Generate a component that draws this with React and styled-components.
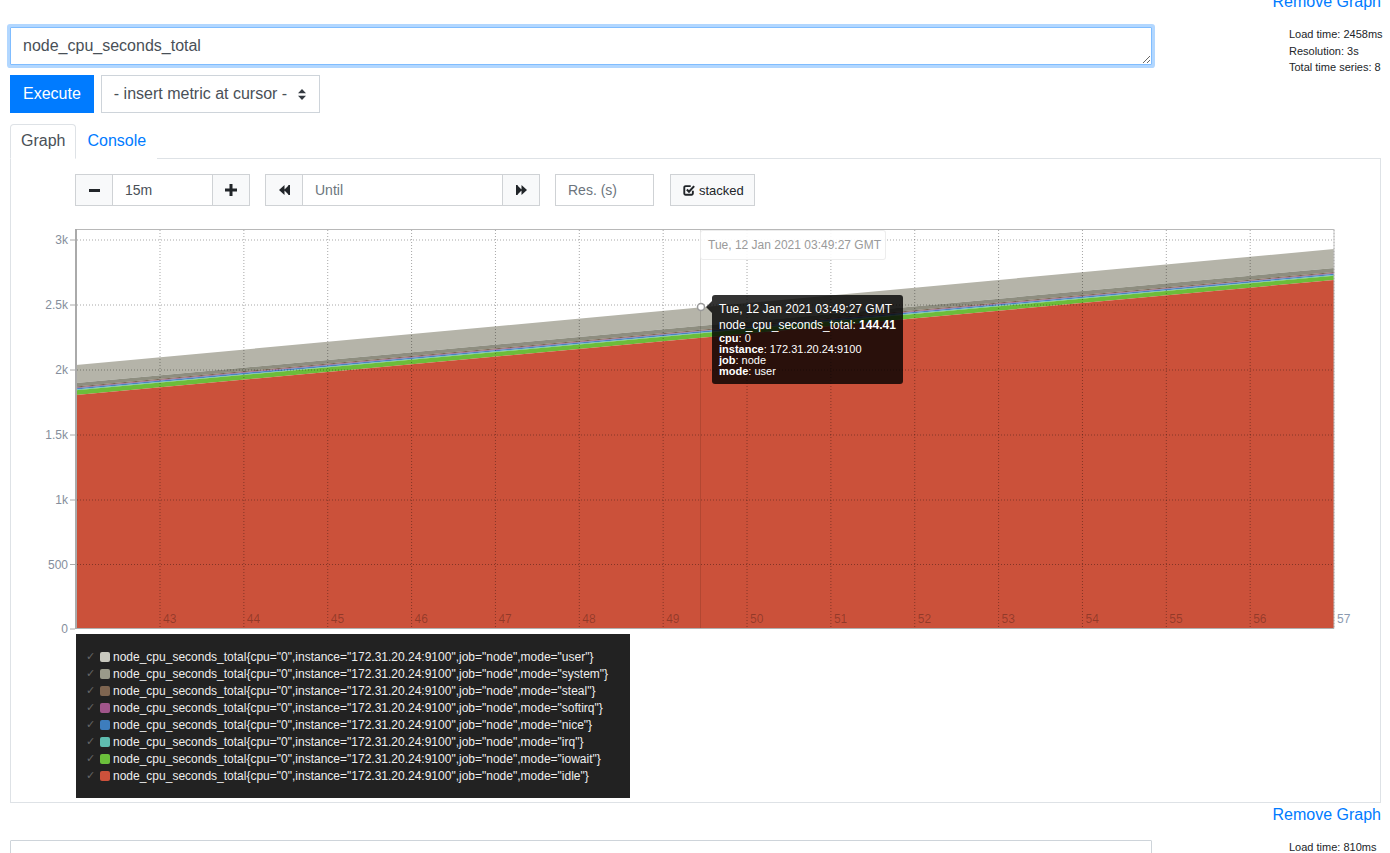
import React from 'react'
import styled, { createGlobalStyle } from 'styled-components'

const GlobalStyle = createGlobalStyle`
  html, body {
    margin: 0;
    padding: 0;
    background: #fff;
    overflow: hidden;
  }
  body {
    font-family: "Liberation Sans", Arial, sans-serif;
    font-size: 16px;
    color: #212529;
  }
  * { box-sizing: border-box; }
`

const labelText = 'node_cpu_seconds_total{cpu="0",instance="172.31.20.24:9100",job="node",mode="'

// pixel boundaries of each stacked band at the left (x=76) and right (x=1334) edge of the plot
const layers = [
  { mode: 'user', swatch: '#c8c8be', fill: '#b5b4a9', l: [365, 383], r: [249, 268] },
  { mode: 'system', swatch: '#9a9a8a', fill: '#8e8e80', l: [383, 386.5], r: [268, 272] },
  { mode: 'steal', swatch: '#7e6550', fill: '#7a6450', l: [386.5, 387.5], r: [272, 273] },
  { mode: 'softirq', swatch: '#a0558a', fill: '#9b5a88', l: [387.5, 388.2], r: [273, 273.7] },
  { mode: 'nice', swatch: '#3d7dbd', fill: '#4a83c0', l: [388.2, 389.6], r: [273.7, 275] },
  { mode: 'irq', swatch: '#5fbdb0', fill: '#5ebcad', l: [389.6, 390.2], r: [275, 275.7] },
  { mode: 'iowait', swatch: '#6bbf3b', fill: '#6cbd3a', l: [390.2, 395], r: [275.7, 280] },
  { mode: 'idle', swatch: '#cd513b', fill: '#cb513a', l: [395, 628], r: [280, 628] },
]

const yTicks = [
  { label: '3k', y: 240 },
  { label: '2.5k', y: 305 },
  { label: '2k', y: 370 },
  { label: '1.5k', y: 435 },
  { label: '1k', y: 500 },
  { label: '500', y: 564.5 },
  { label: '0', y: 629 },
]

const xTicks = Array.from({ length: 15 }, (_, i) => ({ label: String(43 + i), x: 160 + i * 83.86 }))

function Chart() {
  return (
    <ChartWrap>
      <svg width="1320" height="412" viewBox="40 222 1320 412">
        {layers.map((ly) => (
          <polygon
            key={ly.mode}
            points={`76,${ly.l[0]} 1334,${ly.r[0]} 1334,${ly.r[1]} 76,${ly.l[1]}`}
            fill={ly.fill}
          />
        ))}
        <line x1="76" y1="229.5" x2="1334" y2="229.5" stroke="#b8b8b8" />
        {yTicks.slice(0, 6).map((t) => (
          <line key={t.label} x1="77" y1={t.y} x2="1334" y2={t.y} stroke="rgba(0,0,0,0.35)" strokeDasharray="1 2" />
        ))}
        {xTicks.map((t) => (
          <line key={t.label} x1={t.x} y1="230" x2={t.x} y2="628" stroke="rgba(0,0,0,0.35)" strokeDasharray="1 2" />
        ))}
        <line x1="1334" y1="229" x2="1334" y2="628.5" stroke="#c4c4c4" />
        <line x1="76" y1="628.5" x2="1334" y2="628.5" stroke="#b0b0b0" />
        <line x1="76" y1="229" x2="76" y2="629" stroke="#aaaaaa" strokeWidth="2" />
        {yTicks.map((t) => (
          <g key={t.label}>
            <line x1="70" y1={t.y} x2="75" y2={t.y} stroke="#aaa" />
            <text x="68" y={t.y + 4} textAnchor="end" fontSize="12" fill="#858e9c" fontFamily="Liberation Sans, Arial, sans-serif">
              {t.label}
            </text>
          </g>
        ))}
        {xTicks.map((t, i) => (
          <text
            key={t.label}
            x={t.x + 3}
            y="623"
            fontSize="12"
            fill={i === xTicks.length - 1 ? '#8b9ab0' : 'rgba(0,0,0,0.28)'}
            fontFamily="Liberation Sans, Arial, sans-serif"
          >
            {t.label}
          </text>
        ))}
        <line x1="700.5" y1="230" x2="700.5" y2="628" stroke="rgba(0,0,0,0.12)" />
        <circle cx="701" cy="307" r="3.5" fill="#fff" stroke="#9a9a9a" strokeWidth="1.5" />
      </svg>
      <DateFlag>Tue, 12 Jan 2021 03:49:27 GMT</DateFlag>
      <Tooltip>
        <TipLine>Tue, 12 Jan 2021 03:49:27 GMT</TipLine>
        <TipLine>node_cpu_seconds_total: <b>144.41</b></TipLine>
        <TipSmall><b>cpu</b>: 0</TipSmall>
        <TipSmall><b>instance</b>: 172.31.20.24:9100</TipSmall>
        <TipSmall><b>job</b>: node</TipSmall>
        <TipSmall><b>mode</b>: user</TipSmall>
      </Tooltip>
    </ChartWrap>
  )
}

const IconMinus = () => (
  <svg width="11" height="11" viewBox="0 0 11 11"><rect x="0" y="4" width="11" height="3" fill="#212529" /></svg>
)
const IconPlus = () => (
  <svg width="12" height="12" viewBox="0 0 12 12"><path d="M4.5 0h3v4.5H12v3H7.5V12h-3V7.5H0v-3h4.5z" fill="#212529" /></svg>
)
const IconBack = () => (
  <svg width="11" height="10" viewBox="0 0 11 10"><path d="M0 5L5.5 0v10zM5 5l5-5v10z" fill="#212529" /><rect x="9.5" y="0" width="1.5" height="10" fill="#212529" /></svg>
)
const IconFwd = () => (
  <svg width="11" height="10" viewBox="0 0 11 10"><path d="M11 5L5.5 0v10zM6 5L1 0v10z" fill="#212529" /><rect x="0" y="0" width="1.5" height="10" fill="#212529" /></svg>
)
const IconCheckSquare = () => (
  <svg width="12" height="12" viewBox="0 0 14 14">
    <path d="M11.5 8v3a1.5 1.5 0 0 1-1.5 1.5H3A1.5 1.5 0 0 1 1.5 11V4A1.5 1.5 0 0 1 3 2.5h6" stroke="#212529" strokeWidth="2.2" fill="none" />
    <path d="M4.5 6.5l2.5 2.5 6-6.5" stroke="#212529" strokeWidth="2.4" fill="none" />
  </svg>
)
const IconSort = () => (
  <svg width="8" height="11" viewBox="0 0 8 11"><path d="M0 4.2L4 0l4 4.2zM0 6.8L4 11l4-4.2z" fill="#343a40" /></svg>
)

function App() {
  return (
    <>
      <GlobalStyle />
      <Page>
        <RemoveRow><RemoveLink>Remove Graph</RemoveLink></RemoveRow>
        <ExprRow>
          <Expr focused defaultValue="node_cpu_seconds_total" />
          <Stats>
            <div>Load time: 2458ms</div>
            <div>Resolution: 3s</div>
            <div>Total time series: 8</div>
          </Stats>
        </ExprRow>
        <ActionRow>
          <ExecuteButton>Execute</ExecuteButton>
          <MetricSelect>
            <span>- insert metric at cursor -</span>
            <IconSort />
          </MetricSelect>
        </ActionRow>
        <Tabs>
          <Tab active>Graph</Tab>
          <Tab>Console</Tab>
        </Tabs>
        <TabPanel>
          <Controls>
            <Group>
              <IconButton><IconMinus /></IconButton>
              <Field width={99} defaultValue="15m" />
              <IconButton><IconPlus /></IconButton>
            </Group>
            <Group>
              <IconButton><IconBack /></IconButton>
              <Field width={199} placeholder="Until" />
              <IconButton><IconFwd /></IconButton>
            </Group>
            <Field width={99} placeholder="Res. (s)" rounded />
            <StackedButton><IconCheckSquare />stacked</StackedButton>
          </Controls>
          <Chart />
          <Legend>
            {layers.map((ly) => (
              <LegendRow key={ly.mode}>
                <Check>✓</Check>
                <Swatch color={ly.swatch} />
                {labelText + ly.mode + '"}'}
              </LegendRow>
            ))}
          </Legend>
        </TabPanel>

        <RemoveRow><RemoveLink>Remove Graph</RemoveLink></RemoveRow>
        <ExprRow>
          <Expr defaultValue="" />
          <Stats>
            <div>Load time: 810ms</div>
            <div>Resolution: 3s</div>
          </Stats>
        </ExprRow>
      </Page>
    </>
  )
}

export default App

const Page = styled.div`
  padding: 0 9px 0 10px;
  margin-top: -10px;
`

const RemoveRow = styled.div`
  text-align: right;
  line-height: 24px;
  height: 24px;
`

const RemoveLink = styled.a`
  color: #007bff;
  font-size: 16px;
  cursor: pointer;
`

const ExprRow = styled.div`
  display: flex;
  align-items: flex-start;
  height: 38px;
  margin-top: 13px;
`

const Expr = styled.textarea`
  width: 1142px;
  height: 38px;
  flex: none;
  resize: vertical;
  padding: 6px 12px;
  font-family: "Liberation Sans", Arial, sans-serif;
  font-size: 16px;
  line-height: 24px;
  color: #495057;
  border: 1px solid ${(p) => (p.focused ? '#80bdff' : '#ced4da')};
  border-radius: 1px;
  box-shadow: ${(p) => (p.focused ? '0 0 0 3px rgba(0,123,255,0.3)' : 'none')};
  outline: none;
  overflow: hidden;
`

const Stats = styled.div`
  margin-left: 137px;
  margin-top: -1px;
  font-size: 11px;
  line-height: 16.5px;
  color: #212529;
  white-space: nowrap;
`

const ActionRow = styled.div`
  display: flex;
  gap: 7px;
  margin-top: 10px;
`

const ExecuteButton = styled.button`
  height: 38px;
  padding: 0 12px;
  border: 1px solid #007bff;
  border-radius: 0;
  background: #007bff;
  color: #fff;
  font-family: "Liberation Sans", Arial, sans-serif;
  font-size: 16px;
`

const MetricSelect = styled.div`
  width: 219px;
  height: 38px;
  display: flex;
  align-items: center;
  justify-content: space-between;
  padding: 0 13px 0 12px;
  border: 1px solid #ced4da;
  color: #495057;
  font-size: 16px;
`

const Tabs = styled.div`
  display: flex;
  margin-top: 11px;
  border-bottom: 1px solid #dee2e6;
`

const Tab = styled.div`
  height: 35px;
  margin-bottom: -1px;
  padding: 4px 10px 0;
  line-height: 24px;
  font-size: 16px;
  color: ${(p) => (p.active ? '#495057' : '#007bff')};
  border: 1px solid ${(p) => (p.active ? '#dee2e6' : 'transparent')};
  border-bottom-color: ${(p) => (p.active ? '#fff' : 'transparent')};
  border-radius: 4px 4px 0 0;
  background: #fff;
`

const TabPanel = styled.div`
  border: 1px solid #dee2e6;
  border-top: none;
  padding: 15px 0 4px;
`

const Controls = styled.div`
  display: flex;
  align-items: center;
  gap: 15px;
  margin-left: 64px;
  height: 32px;
`

const Group = styled.div`
  display: flex;
  height: 32px;
`

const IconButton = styled.button`
  width: 38px;
  height: 32px;
  padding: 0;
  display: flex;
  align-items: center;
  justify-content: center;
  background: #f8f9fa;
  border: 1px solid #cfd2d5;
  border-radius: 0;
`

const Field = styled.input`
  width: ${(p) => p.width}px;
  height: 32px;
  padding: 0 12px;
  border: 1px solid #cfd2d5;
  border-left: ${(p) => (p.rounded ? '1px solid #cfd2d5' : 'none')};
  border-right: ${(p) => (p.rounded ? '1px solid #cfd2d5' : 'none')};
  border-radius: 0;
  font-family: "Liberation Sans", Arial, sans-serif;
  font-size: 14px;
  color: #495057;
  outline: none;
  &::placeholder {
    color: #6c757d;
  }
`

const StackedButton = styled.button`
  height: 32px;
  width: 85px;
  margin-left: 1px;
  display: flex;
  align-items: center;
  gap: 4px;
  padding: 0 0 0 12px;
  background: #f8f9fa;
  border: 1px solid #cfd2d5;
  border-radius: 0;
  font-family: "Liberation Sans", Arial, sans-serif;
  font-size: 13px;
  color: #212529;
`

const ChartWrap = styled.div`
  position: relative;
  margin: 16px 0 0 29px;
  width: 1320px;
  height: 412px;
  svg {
    display: block;
  }
`

const DateFlag = styled.div`
  position: absolute;
  left: 660px;
  top: 8px;
  width: 186px;
  height: 30px;
  padding-left: 7px;
  line-height: 28px;
  font-size: 12px;
  color: #9a9a9a;
  white-space: nowrap;
  background: rgba(255, 255, 255, 0.9);
  border: 1px solid rgba(0, 0, 0, 0.07);
  border-radius: 3px;
`

const Tooltip = styled.div`
  position: absolute;
  left: 672px;
  top: 73px;
  width: 191px;
  height: 89px;
  padding: 6px 7px;
  background: rgba(0, 0, 0, 0.8);
  color: #fff;
  border-radius: 3px;
  white-space: nowrap;
  &::before {
    content: '';
    position: absolute;
    left: -6px;
    top: 6px;
    border: 6px solid transparent;
    border-left: none;
    border-right-color: rgba(0, 0, 0, 0.8);
  }
`

const TipLine = styled.div`
  font-size: 12px;
  line-height: 16px;
`

const TipSmall = styled.div`
  font-size: 11px;
  line-height: 11px;
`

const Legend = styled.div`
  width: 554px;
  margin: 0 0 0 65px;
  padding: 14px 10px 14px;
  background: #222;
  color: #eee;
  font-size: 12px;
`

const LegendRow = styled.div`
  display: flex;
  align-items: center;
  height: 17px;
  white-space: nowrap;
`

const Check = styled.span`
  width: 14px;
  color: #666;
  font-family: "DejaVu Sans", sans-serif;
  font-size: 11px;
`

const Swatch = styled.span`
  width: 10px;
  height: 10px;
  margin-right: 3px;
  border-radius: 2px;
  background: ${(p) => p.color};
`
